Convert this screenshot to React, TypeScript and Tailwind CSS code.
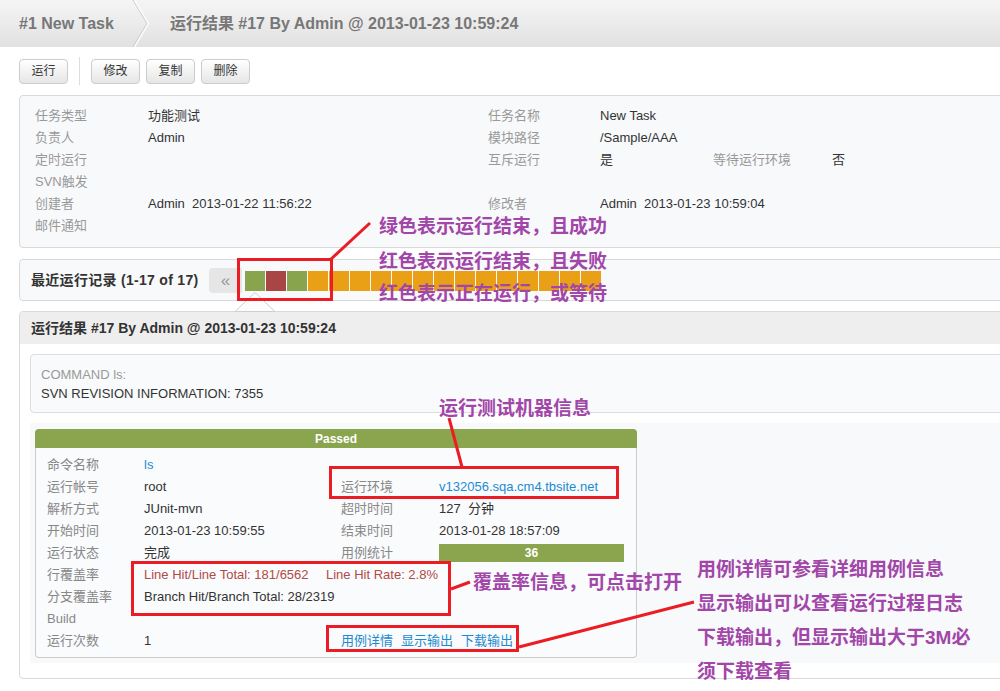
import type { ReactNode } from "react";

// run squares, newest first
const runs = ["ok", "fail", "ok", ...Array(14).fill("wait")];

function Btn({ children }: { children: ReactNode }) {
  return (
    <div className="flex h-[25px] w-[49px] items-center justify-center rounded-[4px] border border-[#ccc] bg-linear-to-b from-white to-[#e6e6e6] text-[12px] text-[#333]">
      {children}
    </div>
  );
}

function InfoRow({ a, b, c, d, e, f }: { a: string; b?: string; c?: string; d?: string; e?: string; f?: string }) {
  return (
    <div className="flex h-[22px] items-center whitespace-pre">
      <div className="w-[113px] text-[#999]">{a}</div>
      <div className="w-[340px]">{b}</div>
      <div className="w-[112px] text-[#999]">{c}</div>
      <div className="w-[113px]">{d}</div>
      <div className="w-[119px] text-[#999]">{e}</div>
      <div>{f}</div>
    </div>
  );
}

function Row({ label, children }: { label: string; children?: ReactNode }) {
  return (
    <div className="flex h-[22px] items-center whitespace-pre">
      <div className="w-[97px] text-[#888]">{label}</div>
      {children}
    </div>
  );
}

function Note({ className, children }: { className: string; children: ReactNode }) {
  return (
    <div className={"absolute whitespace-pre text-[19px] font-bold leading-[24px] text-[#a246a9] " + className}>
      {children}
    </div>
  );
}

export default function App() {
  return (
    <div className="relative h-[691px] w-[1000px] overflow-hidden bg-white font-['Liberation_Sans','Noto_Sans_CJK_SC',sans-serif] text-[13px] text-[#333]">
      {/* breadcrumb */}
      <div className="flex h-[47px] items-center bg-linear-to-b from-[#f5f5f5] to-[#e1e1e1] pl-[19px] text-[16px] font-bold text-[#777]">
        <span>#1 New Task</span>
        <svg className="ml-[18px] h-[47px] w-[20px]" viewBox="0 0 20 47">
          <polyline points="1,0 15,23.5 1,47" fill="none" stroke="#c9c9c9" strokeWidth="1" />
          <polyline points="2.5,0 16.5,23.5 2.5,47" fill="none" stroke="#fbfbfb" strokeWidth="1.5" />
        </svg>
        <span className="ml-[18px]">运行结果 #17 By Admin @ 2013-01-23 10:59:24</span>
      </div>

      {/* toolbar */}
      <div className="mt-[10px] flex items-center pl-[19px]">
        <Btn>运行</Btn>
        <div className="mx-[11px] h-[28px] w-px bg-[#ddd]" />
        <div className="flex gap-[6px]">
          <Btn>修改</Btn>
          <Btn>复制</Btn>
          <Btn>删除</Btn>
        </div>
      </div>

      {/* task info */}
      <div className="ml-[19px] mt-[10px] w-[1000px] rounded-[4px] border border-[#d9d9d9] bg-[#f8f9fb] pb-[10px] pl-[15px] pt-[9px]">
        <InfoRow a="任务类型" b="功能测试" c="任务名称" d="New Task" />
        <InfoRow a="负责人" b="Admin" c="模块路径" d="/Sample/AAA" />
        <InfoRow a="定时运行" c="互斥运行" d="是" e="等待运行环境" f="否" />
        <InfoRow a="SVN触发" />
        <InfoRow a="创建者" b="Admin  2013-01-22 11:56:22" c="修改者" d="Admin  2013-01-23 10:59:04" />
        <InfoRow a="邮件通知" />
      </div>

      {/* recent runs */}
      <div className="ml-[19px] mt-[11px] flex h-[42px] w-[1000px] items-center rounded-[4px] border border-[#d9d9d9] bg-[#f8f9fb] pl-[11px] pt-px">
        <div className="w-[178px] text-[14px] font-bold tracking-[0.3px]">最近运行记录 (1-17 of 17)</div>
        <div className="flex h-[25px] w-[33px] items-center justify-center rounded-l-[4px] bg-[#e6e6e6] text-[17px] text-[#999]">«</div>
        <div className="ml-[3px] flex gap-px">
          {runs.map((r, i) => (
            <div
              key={i}
              className={
                "h-[20px] w-[20px] " +
                (r === "ok" ? "bg-[#88a44d]" : r === "fail" ? "bg-[#a94545]" : "bg-[#e9a016]")
              }
            />
          ))}
        </div>
      </div>

      {/* run result */}
      <div className="ml-[19px] mt-[10px] w-[1000px] rounded-[4px] border border-[#d9d9d9]">
        <div className="flex h-[32px] items-center rounded-t-[4px] bg-[#eee] pl-[11px] text-[14px] font-bold">
          运行结果 #17 By Admin @ 2013-01-23 10:59:24
        </div>
        <div className="px-[10px] pb-[15px] pt-[10px]">
          <div className="rounded-[4px] border border-[#ddd] bg-[#f9fafb] pb-[9px] pl-[10px] pt-[10px] leading-[19px]">
            <div className="text-[#999]">COMMAND ls:</div>
            <div>SVN REVISION INFORMATION: 7355</div>
          </div>
          <div className="mt-[10px] bg-[#f8f9fb] pb-[5px] pl-[5px] pt-[6px]">
            <div className="w-[602px]">
              <div className="flex h-[19px] items-center justify-center rounded-t-[4px] bg-[#8aa54e] text-[12px] font-bold text-white">
                Passed
              </div>
              <div className="rounded-b-[4px] border border-t-0 border-[#ccc] bg-[#fafbfc] pb-[5px] pl-[11px] pt-[6px]">
                <Row label="命令名称">
                  <span className="text-[#1b8bd2]">ls</span>
                </Row>
                <Row label="运行帐号">
                  <div className="w-[197px]">root</div>
                  <div className="w-[98px] text-[#888]">运行环境</div>
                  <span className="text-[#1b8bd2]">v132056.sqa.cm4.tbsite.net</span>
                </Row>
                <Row label="解析方式">
                  <div className="w-[197px]">JUnit-mvn</div>
                  <div className="w-[98px] text-[#888]">超时时间</div>
                  <span>127  分钟</span>
                </Row>
                <Row label="开始时间">
                  <div className="w-[197px]">2013-01-23 10:59:55</div>
                  <div className="w-[98px] text-[#888]">结束时间</div>
                  <span>2013-01-28 18:57:09</span>
                </Row>
                <Row label="运行状态">
                  <div className="w-[197px]">完成</div>
                  <div className="w-[98px] text-[#888]">用例统计</div>
                  <div className="flex h-[18px] w-[185px] items-center justify-center bg-[#8aa54e] text-[12px] font-bold text-white">
                    36
                  </div>
                </Row>
                <Row label="行覆盖率">
                  <div className="w-[182px] text-[#b24a46]">Line Hit/Line Total: 181/6562</div>
                  <span className="text-[#b24a46]">Line Hit Rate: 2.8%</span>
                </Row>
                <Row label="分支覆盖率">
                  <span>Branch Hit/Branch Total: 28/2319</span>
                </Row>
                <Row label="Build" />
                <Row label="运行次数">
                  <div className="w-[197px]">1</div>
                  <div className="flex gap-[8px] text-[#1b8bd2]">
                    <span>用例详情</span>
                    <span>显示输出</span>
                    <span>下载输出</span>
                  </div>
                </Row>
              </div>
            </div>
          </div>
        </div>
      </div>

      {/* popover caret under first run */}
      <svg className="absolute left-[235px] top-[292px] h-[20px] w-[40px]" viewBox="0 0 40 20">
        <polygon points="0,19.5 20,0.5 40,19.5" fill="#fcfcfc" stroke="#cfcfcf" strokeWidth="1" />
      </svg>

      {/* annotations */}
      <div className="absolute left-[237px] top-[258px] h-[43px] w-[96px] border-[3px] border-[#ec1c24]" />
      <div className="absolute left-[329px] top-[466px] h-[33px] w-[290px] border-[3px] border-[#ec1c24]" />
      <div className="absolute left-[131px] top-[561px] h-[55px] w-[320px] border-[3px] border-[#ec1c24]" />
      <div className="absolute left-[326px] top-[625px] h-[27px] w-[193px] border-[3px] border-[#ec1c24]" />
      <svg className="pointer-events-none absolute left-0 top-0 h-[691px] w-[1000px]" viewBox="0 0 1000 691">
        <g stroke="#ec1c24" strokeWidth="3" fill="none">
          <line x1="330" y1="260" x2="370" y2="223" />
          <line x1="449" y1="418" x2="462" y2="467" />
          <line x1="451" y1="589" x2="470" y2="582" />
          <line x1="519" y1="647" x2="694" y2="602" />
        </g>
      </svg>

      <Note className="left-[379px] top-[215px]">绿色表示运行结束，且成功</Note>
      <Note className="left-[379px] top-[250px]">红色表示运行结束，且失败</Note>
      <Note className="left-[379px] top-[282px]">红色表示正在运行，或等待</Note>
      <Note className="left-[439px] top-[397px]">运行测试机器信息</Note>
      <Note className="left-[473px] top-[571px]">覆盖率信息，可点击打开</Note>
      <div className="absolute left-[697px] top-[553px] whitespace-pre text-[19px] font-bold leading-[34px] text-[#a246a9]">
        <div>用例详情可参看详细用例信息</div>
        <div>显示输出可以查看运行过程日志</div>
        <div>下载输出，但显示输出大于3M必</div>
        <div>须下载查看</div>
      </div>
    </div>
  );
}
